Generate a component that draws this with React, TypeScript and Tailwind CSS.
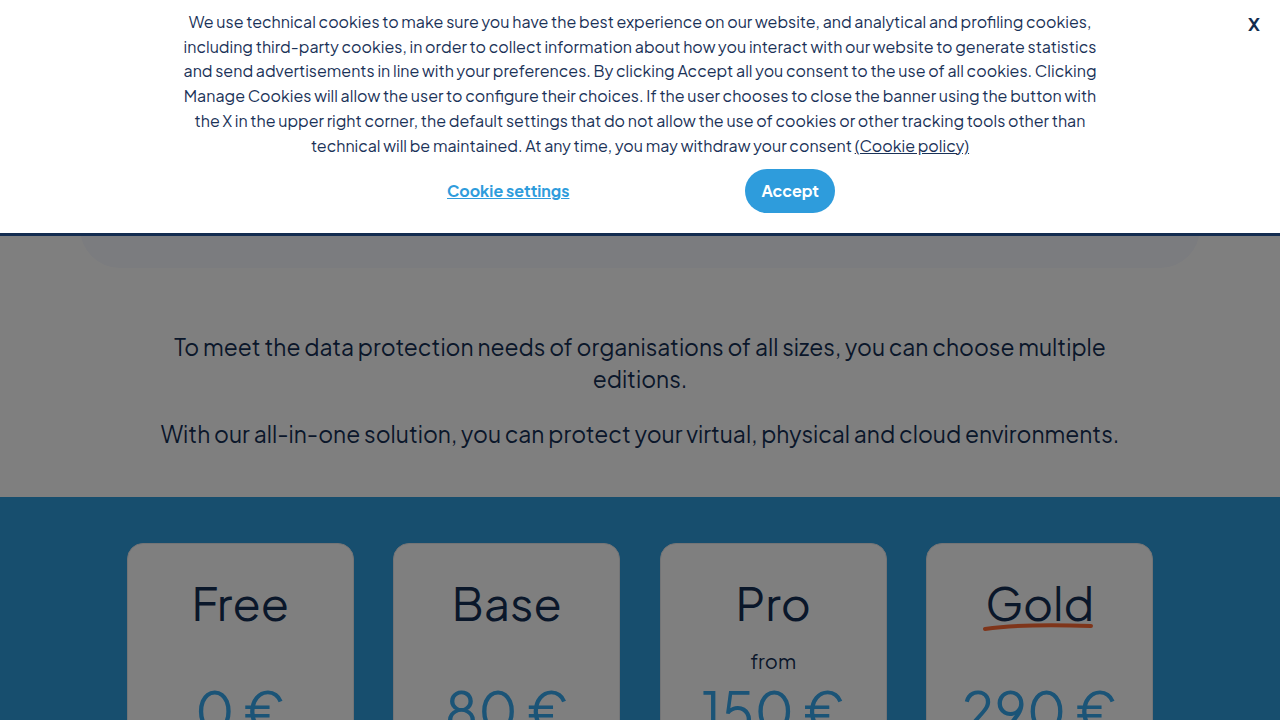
import React from 'react';

// =============================================================================
// Data
// =============================================================================

const PLANS = [
  { name: 'Free', price: '0 €', from: false, highlight: false },
  { name: 'Base', price: '80 €', from: false, highlight: false },
  { name: 'Pro', price: '150 €', from: true, highlight: false },
  { name: 'Gold', price: '290 €', from: false, highlight: true },
];

const FONT = { fontFamily: '"Plus Jakarta Sans", Inter, "Noto Sans", sans-serif' };

// =============================================================================
// Components
// =============================================================================

function PlanCard({ plan }: { plan: (typeof PLANS)[number] }) {
  return (
    <div className="w-[227px] h-[240px] bg-white rounded-2xl border border-[#e6e8ec] flex flex-col items-center pt-[28px]">
      <div className="relative">
        <h3 className="text-[46px] leading-[60px] text-[#142f55]">{plan.name}</h3>
        {plan.highlight && (
          <svg className="absolute left-[-2px] top-[50px] w-[110px] h-[10px]" viewBox="0 0 110 10" fill="none">
            <path d="M2 7 C 30 3, 70 2.5, 108 4" stroke="#ff6a35" strokeWidth="4" strokeLinecap="round" />
          </svg>
        )}
      </div>
      <div className="h-[30px] mt-[14px] text-[20px] leading-[30px] text-[#142f55]">
        {plan.from ? 'from' : ''}
      </div>
      <div className="text-[54px] leading-[60px] text-[#36a8ee] mt-[4px]">{plan.price}</div>
    </div>
  );
}

function CookieBanner() {
  return (
    <div className="fixed top-0 left-0 right-0 z-20 bg-white h-[236px] border-b-[3px] border-[#132c50]">
      <button className="absolute right-[20px] top-[10px] text-[18px] font-bold text-[#132c50]">X</button>
      <p className="pt-[10px] text-center text-[16px] leading-[24.7px] text-[#1a3258] whitespace-nowrap">
        We use technical cookies to make sure you have the best experience on our website, and analytical and profiling cookies,
        <br />
        including third-party cookies, in order to collect information about how you interact with our website to generate statistics
        <br />
        and send advertisements in line with your preferences. By clicking Accept all you consent to the use of all cookies. Clicking
        <br />
        Manage Cookies will allow the user to configure their choices. If the user chooses to close the banner using the button with
        <br />
        the X in the upper right corner, the default settings that do not allow the use of cookies or other tracking tools other than
        <br />
        technical will be maintained. At any time, you may withdraw your consent{' '}
        <a className="underline">(Cookie policy)</a>
      </p>
      <div className="flex items-center justify-center gap-[176px] mt-[11px] pl-[2px]">
        <a className="text-[16px] font-bold text-[#2e9cdc] underline">Cookie settings</a>
        <button className="h-[44px] px-[16px] rounded-full bg-[#2e9cdc] text-white text-[16px] font-bold">
          Accept
        </button>
      </div>
    </div>
  );
}

// =============================================================================
// App
// =============================================================================

export default function App() {
  return (
    <div className="relative h-[720px] bg-white overflow-hidden" style={FONT}>
      {/* Page behind the overlay */}
      <div className="flex justify-center">
        <div className="w-[1120px] h-[268px] bg-[#f6f8fe] rounded-b-[40px]" />
      </div>

      <section className="h-[229px] flex flex-col items-center pt-[63px] text-[#142f55] text-[22.8px] leading-[32px] text-center">
        <p className="w-[945px]">
          To meet the data protection needs of organisations of all sizes, you can choose multiple editions.
        </p>
        <p className="mt-[23px]">
          With our all-in-one solution, you can protect your virtual, physical and cloud environments.
        </p>
      </section>

      <section className="bg-[#2e9cdc] h-[400px] pt-[46px] flex justify-center gap-[39.5px]">
        {PLANS.map((p) => (
          <PlanCard key={p.name} plan={p} />
        ))}
      </section>

      {/* Overlay + banner */}
      <div className="fixed inset-0 z-10 bg-black/50" />
      <CookieBanner />
    </div>
  );
}
